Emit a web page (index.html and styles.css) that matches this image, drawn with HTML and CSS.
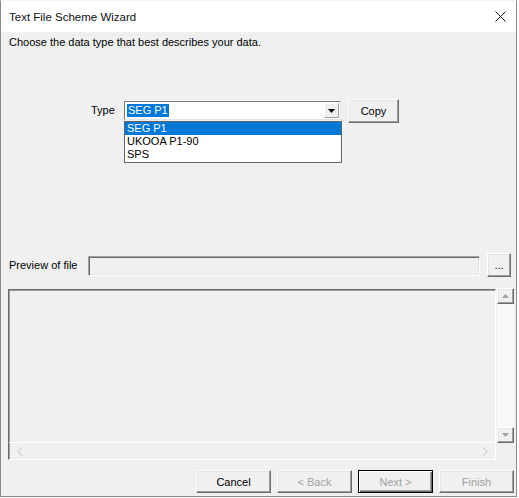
FILE: index.html
```html
<!DOCTYPE html>
<html lang="en">
<head>
    <meta charset="UTF-8">
    <title>Text File Scheme Wizard</title>
    <link rel="stylesheet" href="styles.css">
</head>
<body>

<div class="window">
    <!-- Barra de titulo -->
    <div class="titlebar">
        <span class="title">Text File Scheme Wizard</span>
        <svg class="close" width="11" height="11" viewBox="0 0 11 11">
            <path d="M0.5 0.5 L10.5 10.5 M10.5 0.5 L0.5 10.5" stroke="#111" stroke-width="1" fill="none"/>
        </svg>
    </div>

    <div class="content">
        <div class="intro">Choose the data type that best describes your data.</div>

        <div class="type-row">
            <label class="type-label">Type</label>
            <div class="combo">
                <div class="combo-field">
                    <span class="combo-value">SEG P1</span>
                    <span class="combo-btn">
                        <svg width="7" height="4" viewBox="0 0 7 4"><path d="M0 0 H7 L3.5 4 Z" fill="#000"/></svg>
                    </span>
                </div>
                <ul class="combo-list">
                    <li class="selected">SEG P1</li>
                    <li>UKOOA P1-90</li>
                    <li>SPS</li>
                </ul>
            </div>
            <button class="btn copy">Copy</button>
        </div>

        <div class="preview-row">
            <label class="preview-label">Preview of file</label>
            <div class="field preview-field"></div>
            <button class="btn browse">...</button>
        </div>

        <div class="area-row">
            <div class="area">
                <div class="area-body"></div>
                <div class="hscroll">
                    <svg width="6" height="9" viewBox="0 0 6 9"><path d="M5 0.5 L1 4.5 L5 8.5" stroke="#b8b8b8" fill="none"/></svg>
                    <svg width="6" height="9" viewBox="0 0 6 9"><path d="M1 0.5 L5 4.5 L1 8.5" stroke="#b8b8b8" fill="none"/></svg>
                </div>
            </div>
            <div class="vscroll">
                <div class="sb-btn">
                    <svg width="7" height="4" viewBox="0 0 7 4"><path d="M0 4 H7 L3.5 0 Z" fill="#a0a0a0"/></svg>
                </div>
                <div class="sb-track"></div>
                <div class="sb-btn">
                    <svg width="7" height="4" viewBox="0 0 7 4"><path d="M0 0 H7 L3.5 4 Z" fill="#a0a0a0"/></svg>
                </div>
            </div>
        </div>

        <div class="buttons">
            <button class="btn">Cancel</button>
            <button class="btn disabled">&lt; Back</button>
            <button class="btn disabled default">Next &gt;</button>
            <button class="btn disabled">Finish</button>
        </div>
    </div>
</div>

</body>
</html>
```

FILE: styles.css
```css
body {
    margin: 0;
    background-color: #fff;
    font-family: "Liberation Sans", Arial, sans-serif;
    font-size: 11px;
    color: #000;
}
.window {
    width: 515px;
    height: 495px;
    border: 1px solid #8a8a8a;
    border-top-color: #f4f4f4;
    display: flex;
    flex-direction: column;
    background-color: #f0f0f0;
}
.titlebar {
    height: 31px;
    background-color: #fff;
    display: flex;
    align-items: center;
    justify-content: space-between;
    padding: 0 10px 0 8px;
}
.title {
    font-size: 11.5px;
    color: #111;
}
.close {
    display: block;
}
.content {
    flex: 1;
    display: flex;
    flex-direction: column;
}
.intro {
    margin: 4px 0 0 8px;
    line-height: 13px;
}

/* Fila "Type" */
.type-row {
    display: flex;
    align-items: flex-start;
    margin-top: 50px;
    padding-left: 90px;
}
.type-label {
    width: 33px;
    line-height: 13px;
    margin-top: 5px;
}
.combo {
    position: relative;
    margin-top: 2px;
}
.combo-field {
    width: 213px;
    height: 15px;
    padding: 1px;
    background-color: #fff;
    border: 1px solid;
    border-color: #7a7a7a #e3e3e3 #e3e3e3 #7a7a7a;
    display: flex;
    align-items: center;
    justify-content: space-between;
}
.combo-value {
    background-color: #0078d7;
    color: #fff;
    line-height: 13px;
    padding: 0 1px;
    margin-left: 1px;
}
.combo-btn {
    width: 15px;
    height: 15px;
    box-sizing: border-box;
    background-color: #f0f0f0;
    border: 1px solid;
    border-color: #fff #a0a0a0 #a0a0a0 #fff;
    display: flex;
    align-items: center;
    justify-content: center;
}
.combo-btn svg {
    display: block;
}
.combo-list {
    position: absolute;
    top: 20px;
    left: 0;
    width: 216px;
    margin: 0;
    padding: 0 0 1px 0;
    list-style: none;
    background-color: #fff;
    border: 1px solid #646464;
}
.combo-list li {
    height: 13px;
    line-height: 13px;
    padding-left: 2px;
}
.combo-list li.selected {
    background-color: #0078d7;
    color: #fff;
}

/* Botones */
.btn {
    box-sizing: border-box;
    font-family: "Liberation Sans", Arial, sans-serif;
    font-size: 11px;
    color: #000;
    background-color: #f0f0f0;
    border: 1px solid;
    border-color: #fff #696969 #696969 #fff;
    box-shadow: inset -1px -1px #a0a0a0, inset 1px 1px #e3e3e3;
    padding: 0;
}
.btn.disabled {
    color: #a0a0a0;
}
.btn.default {
    border-color: #000;
    box-shadow: inset 1px 1px #fff, inset -1px -1px #696969, inset -2px -2px #a0a0a0;
}
.copy {
    width: 51px;
    height: 24px;
    margin-left: 7px;
}

/* Fila "Preview of file" */
.preview-row {
    display: flex;
    align-items: center;
    margin-top: 130px;
    padding-left: 8px;
}
.preview-label {
    width: 79px;
}
.field {
    box-sizing: border-box;
    border: 1px solid;
    border-color: #a0a0a0 #fff #fff #a0a0a0;
    box-shadow: inset 1px 1px #696969, inset -1px -1px #e3e3e3;
}
.preview-field {
    width: 392px;
    height: 20px;
    margin-top: 1px;
}
.browse {
    width: 24px;
    height: 24px;
    margin-left: 7px;
    line-height: 20px;
}

/* Area de vista previa */
.area-row {
    display: flex;
    align-items: flex-start;
    margin-top: 11px;
    padding-left: 7px;
}
.area {
    width: 488px;
    height: 171px;
    margin-top: 1px;
    box-sizing: border-box;
    border: 1px solid;
    border-color: #696969 #fff #fff #696969;
    box-shadow: inset 1px 1px #a0a0a0;
    display: flex;
    flex-direction: column;
}
.area-body {
    flex: 1;
}
.hscroll {
    height: 16px;
    border-top: 1px solid #fff;
    display: flex;
    align-items: center;
    justify-content: space-between;
    padding: 0 7px 0 8px;
}
.hscroll svg {
    display: block;
}
.vscroll {
    width: 17px;
    height: 155px;
    margin-left: 1px;
    display: flex;
    flex-direction: column;
}
.sb-btn {
    height: 16px;
    box-sizing: border-box;
    background-color: #f0f0f0;
    border: 1px solid;
    border-color: #fff #696969 #696969 #fff;
    box-shadow: inset -1px -1px #a0a0a0, inset 1px 1px #e3e3e3;
    display: flex;
    align-items: center;
    justify-content: center;
}
.sb-btn svg {
    display: block;
}
.sb-track {
    flex: 1;
    background-color: #f8f8f8;
}

/* Botones inferiores */
.buttons {
    display: flex;
    justify-content: flex-end;
    gap: 6px;
    margin-top: 10px;
    padding-right: 2px;
}
.buttons .btn {
    width: 75px;
    height: 23px;
}
```
